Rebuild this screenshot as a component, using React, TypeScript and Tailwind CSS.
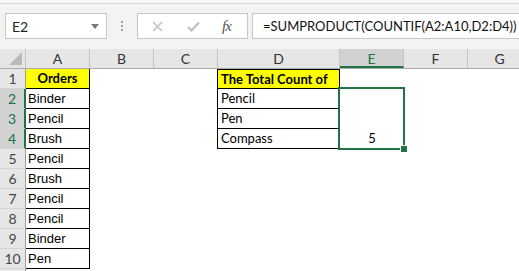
const colA = ['Binder', 'Pencil', 'Brush', 'Pencil', 'Brush', 'Pencil', 'Pencil', 'Binder', 'Pen'];
const colD = ['Pencil', 'Pen', 'Compass'];
const headers = [
  { label: 'A', w: 'w-[64px]' },
  { label: 'B', w: 'w-[64px]' },
  { label: 'C', w: 'w-[64px]' },
  { label: 'D', w: 'w-[122px]' },
  { label: 'E', w: 'w-[64px]' },
  { label: 'F', w: 'w-[64px]' },
  { label: 'G', w: 'w-[64px]' },
];

const calibri = "font-['Lato','Carlito',sans-serif]";
const arial = "font-['Liberation_Sans',Arial,sans-serif]";

function RowHeader({ n, label = true }: { n: number; label?: boolean }) {
  const sel = n >= 2 && n <= 4;
  return (
    <div
      className={`w-[26px] shrink-0 h-full box-border border-b border-[#d4d4d4] text-center leading-[20px] text-[14px] ${calibri} ${
        sel
          ? 'bg-[#d2d2d2] border-r-2 border-r-[#217346] text-[#217346]'
          : 'bg-[#e6e6e6] border-r border-r-[#9e9e9e] text-[#444]'
      }`}
    >
      {label ? n : ''}
    </div>
  );
}

export default function App() {
  return (
    <div className="w-[519px] h-[271px] overflow-hidden bg-white text-black">
      {/* formula bar */}
      <div className="h-[49px] bg-[#f3f3f3]">
        <div className="h-[3px] bg-[#f7f7f7] border-b border-[#d5d5d5] box-content" />
        <div className="flex items-start pt-[9px]">
          <div className={`ml-[5px] w-[102px] shrink-0 h-[26px] box-border bg-white border border-[#c6c6c6] flex items-center justify-between pl-[6px] pr-[7px] text-[14px] text-[#222] ${calibri}`}>
            <span>E2</span>
            <svg width="8" height="5" viewBox="0 0 8 5">
              <polygon points="0,0 8,0 4,5" fill="#7a7a7a" />
            </svg>
          </div>
          <div className="w-[30px] shrink-0 h-[26px] flex flex-col items-center justify-center gap-[2px]">
            <span className="w-[2px] h-[2px] bg-[#a0a0a0]" />
            <span className="w-[2px] h-[2px] bg-[#a0a0a0]" />
            <span className="w-[2px] h-[2px] bg-[#a0a0a0]" />
          </div>
          <div className="w-[111px] shrink-0 h-[26px] box-border bg-white border border-[#c6c6c6] flex items-center">
            <svg className="ml-[14px]" width="11" height="11" viewBox="0 0 11 11">
              <path d="M1 1L10 10M10 1L1 10" stroke="#c2c2c2" strokeWidth="1.6" />
            </svg>
            <svg className="ml-[24px]" width="13" height="11" viewBox="0 0 13 11">
              <path d="M1 6L4.5 9.5L12 1.5" stroke="#c2c2c2" strokeWidth="2.2" fill="none" />
            </svg>
            <span className="ml-[22px] italic text-[15px] text-[#555] font-['Liberation_Serif',serif] tracking-[-1px]">fx</span>
          </div>
          <div className={`ml-[4px] flex-1 min-w-0 -mr-[2px] h-[26px] box-border bg-white border border-[#c6c6c6] pl-[10px] leading-[24px] text-[13px] text-[#111] whitespace-nowrap ${calibri}`}>
            =SUMPRODUCT(COUNTIF(A2:A10,D2:D4))
          </div>
        </div>
      </div>

      {/* sheet */}
      <div className="relative">
        <div className="flex h-[20px] box-border border-b border-[#ababab] bg-[#e6e6e6]">
          <div className="w-[26px] shrink-0 h-full box-border border-r border-[#c4c4c4] relative">
            <svg className="absolute right-[3px] bottom-[3px]" width="13" height="13" viewBox="0 0 13 13">
              <polygon points="13,0 13,13 0,13" fill="#b9b9b9" />
            </svg>
          </div>
          {headers.map((h) => (
            <div
              key={h.label}
              className={`${h.w} shrink-0 h-full box-border border-r border-[#c4c4c4] text-center leading-[19px] text-[14px] ${calibri} ${
                h.label === 'E'
                  ? 'bg-[#d2d2d2] border-b-2 border-b-[#217346] text-[#217346]'
                  : 'text-[#333]'
              }`}
            >
              {h.label}
            </div>
          ))}
        </div>

        {/* row 1 */}
        <div className="flex h-[20px]">
          <RowHeader n={1} />
          <div className={`w-[64px] shrink-0 box-border border-r border-b border-black bg-[#ffff00] text-center font-bold text-[13px] leading-[19px] ${calibri}`}>
            Orders
          </div>
          <div className="w-[127px] shrink-0" />
          <div className={`w-[123px] shrink-0 box-border border border-black bg-[#ffff00] pl-[3px] font-bold text-[13px] leading-[18px] whitespace-nowrap ${calibri}`}>
            The Total Count of
          </div>
        </div>

        {colA.map((v, i) => {
          const n = i + 2;
          const d = colD[i];
          return (
            <div key={n} className="flex h-[20px]">
              <RowHeader n={n} />
              <div className={`w-[64px] shrink-0 box-border border-r border-b border-black pl-[2px] text-[13px] leading-[19px] ${arial}`}>
                {v}
              </div>
              {d && (
                <>
                  <div className="w-[127px] shrink-0" />
                  <div className={`w-[123px] shrink-0 box-border border-l border-r border-b border-black pl-[3px] text-[13px] leading-[19px] ${calibri}`}>
                    {d}
                  </div>
                  <div className={`w-[64px] shrink-0 text-center text-[13px] leading-[19px] ${calibri}`}>
                    {n === 4 ? '5' : ''}
                  </div>
                </>
              )}
            </div>
          );
        })}

        <div className="flex h-[20px]">
          <RowHeader n={11} label={false} />
        </div>

        {/* selection E2:E4 */}
        <div className="absolute left-[338px] top-[38px] w-[67px] h-[63px] border-2 border-[#217346]" />
        <div className="absolute left-[401px] top-[97px] w-[6px] h-[6px] bg-[#217346] outline outline-1 outline-white" />
      </div>
    </div>
  );
}
